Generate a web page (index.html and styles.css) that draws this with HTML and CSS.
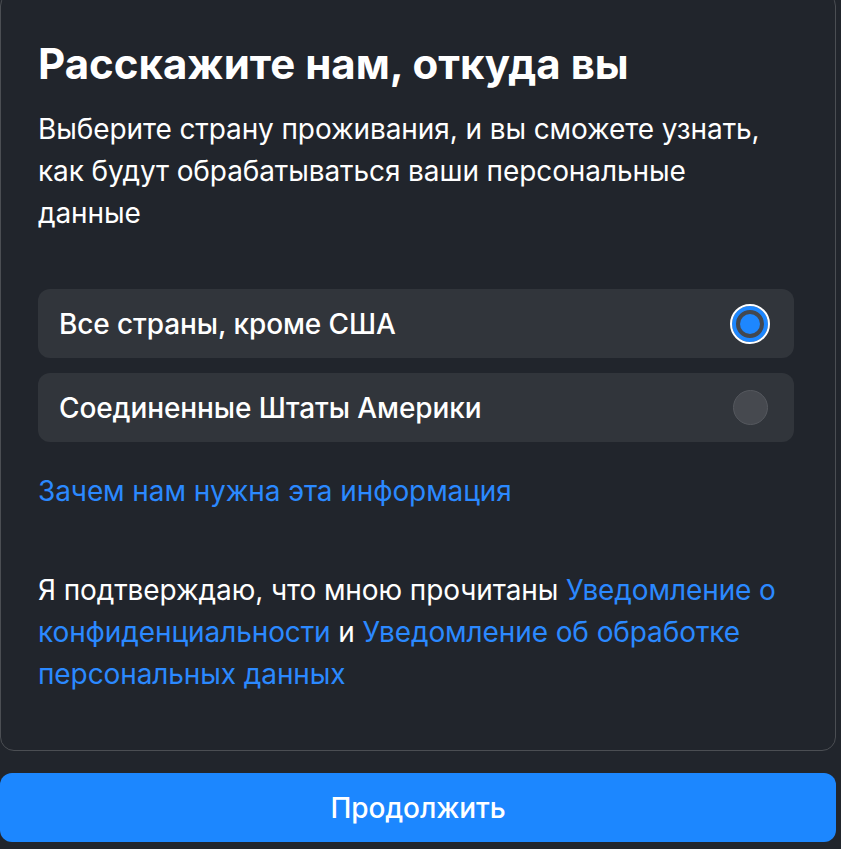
FILE: index.html
```html
<!DOCTYPE html>
<html lang="ru">
<head>
<meta charset="utf-8">
<link rel="stylesheet" href="styles.css">
</head>
<body>
<div class="page">
  <section class="card">
    <h1 class="title">Расскажите нам, откуда вы</h1>
    <p class="lead">Выберите страну проживания, и вы сможете узнать, как будут обрабатываться ваши персональные данные</p>
    <div class="options">
      <label class="option">
        <span class="option-text">Все страны, кроме США</span>
        <span class="radio radio-on"><span class="radio-dot"></span></span>
      </label>
      <label class="option">
        <span class="option-text">Соединенные Штаты Америки</span>
        <span class="radio radio-off"></span>
      </label>
    </div>
    <a class="link why" href="#">Зачем нам нужна эта информация</a>
    <p class="confirm">Я подтверждаю, что мною прочитаны <a class="link" href="#">Уведомление о конфиденциальности</a> и <a class="link" href="#">Уведомление об обработке персональных данных</a></p>
  </section>
  <button class="continue">Продолжить</button>
</div>
</body>
</html>
```

FILE: styles.css
```css
* { box-sizing: border-box; }
html, body {
  margin: 0;
  padding: 0;
  background: #21252c;
  font-family: Inter, "Noto Sans", sans-serif;
  color: #ffffff;
  overflow: hidden;
}
.page {
  width: 836px;
  display: flex;
  flex-direction: column;
}
.card {
  margin-top: -8px;
  border: 1px solid #4b4e53;
  border-radius: 14px;
  padding: 46px 40px 55px 37px;
  display: flex;
  flex-direction: column;
  align-items: flex-start;
}
.title {
  margin: 0;
  font-size: 42px;
  line-height: 50px;
  font-weight: 700;
}
.lead {
  margin: 19px 0 0;
  font-size: 28px;
  line-height: 42px;
  letter-spacing: -0.1px;
  max-width: 756px;
}
.options {
  margin-top: 55px;
  width: 756px;
  display: flex;
  flex-direction: column;
  gap: 15px;
}
.option {
  height: 69px;
  background: #31353b;
  border-radius: 12px;
  padding: 0 24px 0 21px;
  display: flex;
  align-items: center;
  justify-content: space-between;
}
.option-text {
  font-size: 28px;
  font-weight: 500;
  letter-spacing: -0.1px;
}
.radio {
  width: 40px;
  height: 40px;
  border-radius: 50%;
  display: flex;
  align-items: center;
  justify-content: center;
}
.radio-on {
  border: 2px solid #ffffff;
  background: #434850;
  box-shadow: inset 0 0 0 4px #1d87ff;
}
.radio-dot {
  width: 20px;
  height: 20px;
  border-radius: 50%;
  background: #1d87ff;
}
.radio-off {
  width: 35px;
  height: 35px;
  margin-right: 2.5px;
  background: #46494f;
  border: 1px solid #55585e;
}
.link {
  color: #2b89ff;
  text-decoration: none;
}
.why {
  margin-top: 28px;
  font-size: 28px;
  line-height: 42px;
  letter-spacing: -0.1px;
}
.confirm {
  margin: 57px 0 0;
  font-size: 28px;
  line-height: 42px;
  letter-spacing: -0.1px;
  max-width: 756px;
}
.continue {
  margin-top: 22px;
  height: 69px;
  width: 836px;
  border: none;
  border-radius: 12px;
  background: #1c87ff;
  color: #ffffff;
  font-family: Inter, "Noto Sans", sans-serif;
  font-size: 28px;
  font-weight: 500;
  letter-spacing: -0.1px;
}
```
